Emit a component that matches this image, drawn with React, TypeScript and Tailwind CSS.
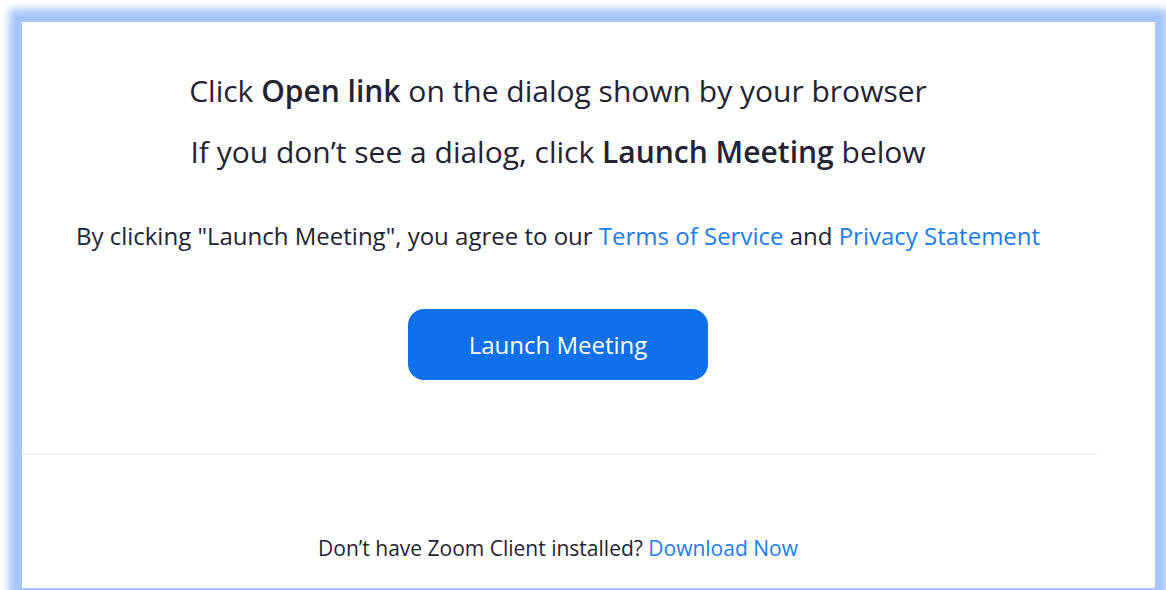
export default function App() {
  return (
    <div className="h-[590px] w-[1166px] overflow-hidden bg-white pl-[22px] pt-[22px] font-['Open_Sans',sans-serif] text-[#232333]">
      <div className="h-[566px] w-[1133px] bg-white shadow-[0_0_8px_13px_#a6c5fb]">
        <div className="flex w-[1072px] flex-col items-center">
          <p className="mt-[51px] text-[30px] leading-[36px]">
            Click <b className="font-semibold">Open link</b> on the dialog shown by your browser
          </p>
          <p className="mt-[25px] text-[30px] leading-[36px]">
            If you don’t see a dialog, click <b className="font-semibold">Launch Meeting</b> below
          </p>
          <p className="mt-[51px] text-[24px] leading-[30px]">
            By clicking "Launch Meeting", you agree to our{" "}
            <a className="text-[#1a7cf0]">Terms of Service</a> and{" "}
            <a className="text-[#1a7cf0]">Privacy Statement</a>
          </p>
          <button className="mt-[58px] h-[71px] w-[300px] rounded-[16px] bg-[#0e71eb] text-[24px] text-white">
            Launch Meeting
          </button>
          <div className="mt-[73px] h-[2px] w-[1075px] self-start bg-[#f0f0f3]" />
          <p className="mt-[79px] text-[21px] leading-[28px]">
            Don’t have Zoom Client installed? <a className="text-[#1a7cf0]">Download Now</a>
          </p>
        </div>
      </div>
    </div>
  );
}
